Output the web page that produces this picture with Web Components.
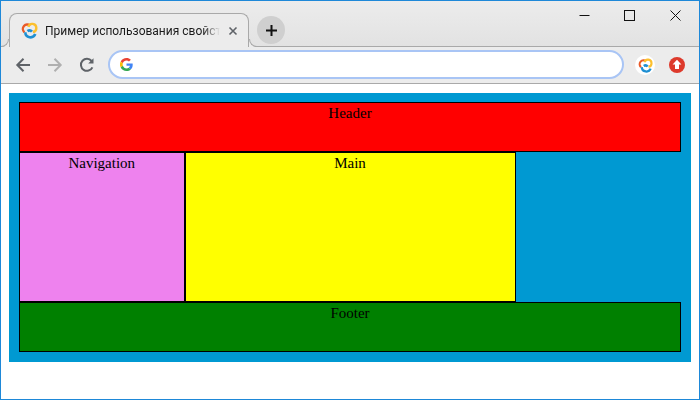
<!DOCTYPE html>
<html><head><meta charset="utf-8"><title>Grid</title>
<style>html,body{margin:0;padding:0;background:#fff}</style></head>
<body>
<browser-window>
  <grid-demo>
    <grid-cell area="header" style="--bg:#ff0000">Header</grid-cell>
    <grid-cell area="nav" style="--bg:#ee82ee">Navigation</grid-cell>
    <grid-cell area="main" style="--bg:#ffff00">Main</grid-cell>
    <grid-cell area="footer" style="--bg:#008000">Footer</grid-cell>
  </grid-demo>
</browser-window>
<script>
const RINGS=`<svg width="17" height="17" viewBox="0 0 17 17" fill="none" stroke-width="2.4">
<path d="M3.400 10.300A4.200 4.200 0 1 1 9.200 3.600" stroke="#ea5a28"/>
<path d="M4.300 10.300a5.200 5.200 0 0 0 10 1.800" stroke="#1e8fd2" stroke-width="2.600"/>
<path d="M6.500 9.100a3.400 3.400 0 0 1 4.500 .6" stroke="#1e8fd2" stroke-width="2.800"/>
<path d="M7.300 4.800a4.100 4.100 0 1 1 4.600 5.200" stroke="#fcc02e"/></svg>`;
customElements.define('browser-tab',class extends HTMLElement{constructor(){super();this.attachShadow({mode:'open'}).innerHTML=`<style>
:host{display:flex;align-items:center;box-sizing:border-box;width:240px;height:34px;margin-left:8px;padding:0 10px 0 11px;background:#ececec;border:1px solid #a9a9a9;border-bottom:0;border-radius:8px 8px 0 0;font:12px Roboto,"Noto Sans",sans-serif;color:#1a1a1a;position:relative}
:host::before,:host::after{content:"";position:absolute;bottom:0;width:8px;height:8px;box-sizing:border-box;border-bottom:1px solid #a9a9a9}
:host::before{left:-9px;border-right:1px solid #a9a9a9;border-radius:0 0 8px 0;box-shadow:4px 4px 0 4px #ececec;clip-path:inset(0 0 0 0)}
:host::after{right:-9px;border-left:1px solid #a9a9a9;border-radius:0 0 0 8px;box-shadow:-4px 4px 0 4px #ececec;clip-path:inset(0 0 0 0)}
.t{flex:1;min-width:0;margin-left:7px;white-space:nowrap;overflow:hidden;-webkit-mask-image:linear-gradient(90deg,#000 90%,transparent);mask-image:linear-gradient(90deg,#000 90%,transparent)}
.x{margin-left:8px}svg{display:block;flex:none}
</style>${RINGS}<span class="t"><slot></slot></span><svg class="x" width="10" height="10" viewBox="0 0 10 10" stroke="#5f6368" stroke-width="1.6"><path d="M1.500 1.500l7 7M8.500 1.500l-7 7"/></svg>`}});
customElements.define('window-controls',class extends HTMLElement{constructor(){super();this.attachShadow({mode:'open'}).innerHTML=`<style>
:host{display:flex;align-self:flex-start;margin-left:auto;margin-right:1px}
div{width:45.500px;height:29px;display:flex;align-items:center;justify-content:center}
</style>
<div><svg width="11" height="11" viewBox="0 0 11 11"><path d="M0.500 5.500h10" stroke="#111" stroke-width="1"/></svg></div>
<div><svg width="11" height="11" viewBox="0 0 11 11"><rect x=".5" y=".5" width="10" height="10" fill="none" stroke="#111"/></svg></div>
<div><svg width="11" height="11" viewBox="0 0 11 11"><path d="M.5.5l10 10M10.500.5l-10 10" stroke="#111" stroke-width="1" fill="none"/></svg></div>`}});
customElements.define('browser-toolbar',class extends HTMLElement{constructor(){super();this.attachShadow({mode:'open'}).innerHTML=`<style>
:host{display:flex;align-items:center;box-sizing:border-box;height:37px;background:#ececec;border-bottom:1px solid #a9a9a9;padding-left:14px}
svg{display:block;flex:none}
.nav{margin-right:16px}
.omni{flex:1;box-sizing:border-box;height:29px;border:2px solid #a9c5f5;border-radius:15px;background:#fff;display:flex;align-items:center;padding-left:10px;margin:-1px 11px 0 -3px}
.ext{width:20px;height:20px;border-radius:50%;background:#fff;display:flex;align-items:center;justify-content:center;flex:none}
</style>
<svg class="nav" width="16" height="16" viewBox="0 0 16 16" fill="none" stroke="#5f6368" stroke-width="2"><path d="M15 8H2.500M8.500 1.800L2.300 8l6.200 6.200"/></svg>
<svg class="nav" width="16" height="16" viewBox="0 0 16 16" fill="none" stroke="#b0b0b0" stroke-width="2"><path d="M1 8h12.500M7.500 1.800L13.700 8l-6.200 6.200"/></svg>
<svg class="nav" width="16" height="16" viewBox="0 0 16 16" fill="none" stroke="#5f6368" stroke-width="2"><path d="M13.400 10.300A6 6 0 1 1 12.600 4"/><path d="M14.500 1.200v5.400H9.200z" fill="#5f6368" stroke="none"/></svg>
<div class="omni"><svg width="13" height="13" viewBox="0 0 48 48"><path fill="#ea4335" d="M24 9.500c3.500 0 6.700 1.300 9.200 3.500l6.900-6.900C35.900 2.400 30.400 0 24 0 14.600 0 6.500 5.400 2.600 13.200l8 6.200C12.500 13.600 17.800 9.500 24 9.500z"/><path fill="#4285f4" d="M46.900 24.500c0-1.600-.1-3.100-.4-4.500H24v9h12.900c-.6 3-2.200 5.500-4.700 7.200l7.700 6c4.500-4.200 7-10.300 7-17.700z"/><path fill="#fbbc05" d="M10.500 28.600A14.500 14.500 0 0 1 10.500 19.400l-8-6.200A24 24 0 0 0 2.600 34.800z"/><path fill="#34a853" d="M24 48c6.500 0 11.900-2.100 15.900-5.800l-7.700-6c-2.200 1.500-4.900 2.300-8.200 2.300-6.200 0-11.500-4.200-13.400-9.800l-8 6.200C6.500 42.600 14.600 48 24 48z"/></svg></div>
<div class="ext" style="margin-right:13px">${RINGS.replace('width="17" height="17"','width="15" height="15"')}</div>
<svg width="18" height="18" viewBox="0 0 18 18" style="margin-right:13px"><circle cx="9" cy="9" r="8" fill="#dd3a2c"/><path d="M9 3.800L13.400 8.600H11V13H7V8.600H4.600z" fill="#fff"/></svg>`}});
customElements.define('browser-window',class extends HTMLElement{constructor(){super();this.attachShadow({mode:'open'}).innerHTML=`<style>
:host{display:flex;flex-direction:column;box-sizing:border-box;width:700px;height:400px;border:1px solid #1e88d8;background:#fff;overflow:hidden}
.bar{display:flex;align-items:flex-end;height:46px;flex:none;background:linear-gradient(#ececec,#e2e2e2);box-sizing:border-box;position:relative}
.bar::after{content:"";position:absolute;left:0;right:0;bottom:0;height:1px;background:#a9a9a9}
browser-tab{z-index:1}
.new{width:28px;height:28px;border-radius:50%;background:#cfcfcf;display:flex;align-items:center;justify-content:center;margin:0 0 3px 8px;flex:none}
.page{flex:1;padding:9px 8px}
</style>
<div class="bar"><browser-tab>Пример использования свойства grid</browser-tab>
<div class="new"><svg width="11" height="11" viewBox="0 0 11 11"><path d="M5.500 0v11M0 5.500h11" stroke="#111" stroke-width="2"/></svg></div>
<window-controls></window-controls></div>
<browser-toolbar></browser-toolbar>
<div class="page"><slot></slot></div>`}});
customElements.define('grid-demo',class extends HTMLElement{constructor(){super();this.attachShadow({mode:'open'}).innerHTML=`<style>
:host{display:grid;box-sizing:border-box;padding:9px 10px 10px;background:#0099d2;grid-template-columns:1fr 2fr 1fr;grid-template-rows:50px 150px 50px;grid-template-areas:"header header header" "nav main ." "footer footer footer";font:15px/18px "Liberation Serif",serif;color:#000}
</style><slot></slot>`}});
customElements.define('grid-cell',class extends HTMLElement{constructor(){super();this.attachShadow({mode:'open'}).innerHTML=`<style>
:host{display:block;box-sizing:border-box;border:1px solid #000;padding-top:1px;text-align:center;background:var(--bg)}
</style><slot></slot>`;this.style.gridArea=this.getAttribute('area')}});
</script>
</body></html>
